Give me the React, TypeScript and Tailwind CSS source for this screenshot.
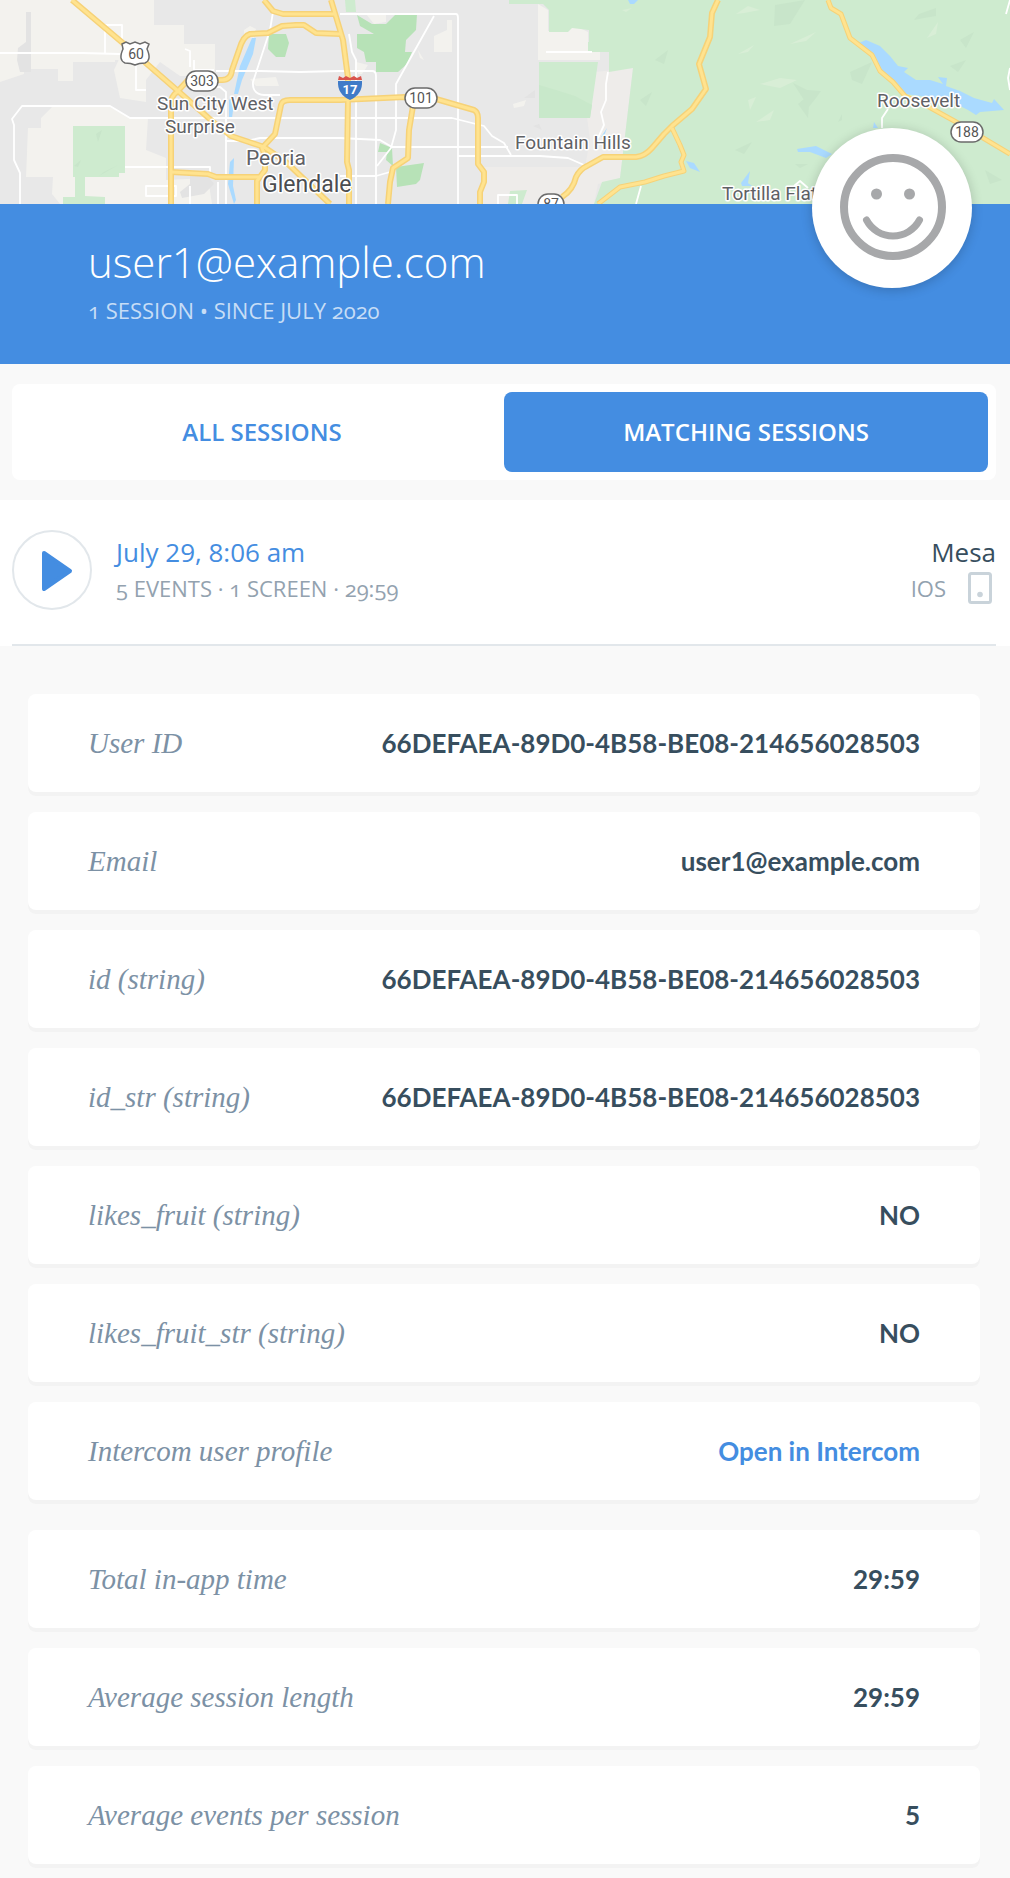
import { useState } from 'react';

type Row = { label: string; value: string; href?: string };

const profileRows: Row[] = [
  { label: 'User ID', value: '66DEFAEA-89D0-4B58-BE08-214656028503' },
  { label: 'Email', value: 'user1@example.com' },
  { label: 'id (string)', value: '66DEFAEA-89D0-4B58-BE08-214656028503' },
  { label: 'id_str (string)', value: '66DEFAEA-89D0-4B58-BE08-214656028503' },
  { label: 'likes_fruit (string)', value: 'NO' },
  { label: 'likes_fruit_str (string)', value: 'NO' },
  { label: 'Intercom user profile', value: 'Open in Intercom', href: '#intercom' },
];

const statRows: Row[] = [
  { label: 'Total in-app time', value: '29:59' },
  { label: 'Average session length', value: '29:59' },
  { label: 'Average events per session', value: '5' },
];

// Roads are drawn twice: a wide darker casing, then the lighter fill on top
const highways = [
  'M72 0L124 44L178 91L212 121L231 136L264 147L286 162L330 204',
  'M171 204V104Q171 96 177 92L188 80H222Q231 80 232 70L239 50Q243 36 250 34L268 33L282 26L296 25H304L316 33L340 34',
  'M171 172L208 174L216 177H260',
  'M257 204V181L265 170V156L262 148L275 134L281 105Q282 100 290 100H340L405 97L436 99L474 110Q478 112 478 118V164L484 172V182L480 192V204',
  'M264 0L273 11L283 14H335',
  'M331 0L343 40L348 78V100L347 162L349 170V204',
  'M413 106L409 130L408 158L393 168L390 182L388 204',
  'M562 197Q573 190 576 177Q580 169 587 166L603 157H636Q645 156 652 148L664 134L672 126L692 109L706 89L699 64L710 37L712 13L718 0',
];

const smallHighways = [
  'M598 204L620 187L645 182L664 176L676 173L684 171L681 162L684 155L680 145L672 128',
  'M828 0L831 8L841 14L850 38L872 55L880 71L893 82L905 96L929 107L958 123L1010 154',
];

const streets = [
  'M0 53H82L120 54',
  'M20 204V173L14 160V125L12 119L22 106H110L130 118H340',
  'M226 204V141H246L260 138H340',
  'M226 141V92L220 87H198',
  'M105 54V25H122V42L136 55V90H146',
  'M194 60V70H214M185 49L190 51V67',
  'M216 71H260L300 72L340 71L372 71Q376 71 376 76V204',
  'M273 12L270 30L253 82Q252 94 264 95H280',
  'M340 14H456Q458 14 458 18V204',
  'M434 16L396 84V130L391 148L377 166',
  'M349 34L352 52L356 60V204',
  'M340 118H452L484 126L492 136L504 143L511 155',
  'M340 138L380 140L392 147H508M458 156H540L568 158L584 165',
  'M340 176H376L390 172',
  'M125 167H210V177M146 186H176V196H146ZM190 186V204M218 182V204',
  'M546 52H592M608 72L606 84V100L601 112L604 125L598 138',
  'M498 204V195H517V204M641 186L636 204',
  'M888 109L882 118V128M1010 0L1006 14M1010 68L1008 78L1010 90',
  'M794 186L800 181L808 188',
];

function RouteBadge({ x, y, w, label }: { x: number; y: number; w: number; label: string }) {
  return (
    <g>
      <rect x={x - w / 2} y={y - 10} width={w} height={20} rx={10} fill="#fff" stroke="#6b6b6b" strokeWidth={1.5} />
      <text x={x} y={y + 5} fontSize={14} fill="#555" textAnchor="middle">
        {label}
      </text>
    </g>
  );
}

function MapBanner() {
  return (
    <svg
      viewBox="0 0 1010 204"
      preserveAspectRatio="xMidYMid slice"
      className="block h-[204px] w-full font-['Roboto',sans-serif]"
      role="img"
      aria-label="Map of the Phoenix area"
    >
      <rect width="1010" height="204" fill="#e8e8e8" />

      {/* open land */}
      <g fill="#f3f2ee">
        <path d="M0 0H154V44H130L150 52V60H115V62H73V81H58V69H24V74L0 82Z" />
        <path d="M128 40L154 25H184V44H215V76H180L160 62L146 80V102L120 98L114 70Z" />
        <path d="M28 128H41V118L52 107H110L130 118H148L146 150L166 158V180L208 178L212 204H60L52 194L53 177H26Z" />
        <path d="M164 53H174V63H164ZM244 30L250 26L256 29L254 38L244 36ZM250 79L276 77L279 86L256 86Z" />
        <path d="M366 14H386V22L374 24ZM434 36L447 30V20H452V52H434ZM418 50L424 60L420 58Z" />
        <path d="M538 4L548 10V31H568V28H580L588 32V50H600V60H538Z" />
        <path d="M513 104L526 100L524 106L514 108ZM356 62L368 65L362 74H358Z" />
      </g>
      <path d="M483 167H585L590 140L586 110L595 72L633 68L620 178L598 184L594 204H483Z" fill="#eeecea" />
      <g fill="#e3e3e3">
        <path d="M26 12H31V72H20L17 60L18 48L26 42Z" />
        <path d="M180 192L190 184V176H208L214 184L204 194L182 198Z" />
        <path d="M524 98L535 90V98ZM533 126L539 124L542 130Z" />
      </g>

      {/* parks and forest */}
      <g fill="#ceebcf">
        <path d="M73 126H125V173H119V177H85V196L105 197V204H63V197H75V177H73Z" />
        <path d="M509 0H1010V204H594L602 182L620 178L633 68L609 72V52H588V42H589V30L572 28L568 32H549V10L543 4H509Z" />
        <path d="M539 62H598L590 118H539Z" />
        <path d="M345 0H355L356 12H346ZM510 191L527 190L522 204H508Z" />
      </g>
      <g fill="#b7e2b7">
        <path d="M269 34H286L289 43L285 57H276L268 49Z" />
        <path d="M357 15L372 24H386L396 14H417L416 30L406 40L405 52H412L407 64L398 72H376V62H366L364 52L357 48V34H374L360 26Z" />
        <path d="M380 143L392 148L393 166L386 160L387 152H378ZM396 167L424 163L420 180L416 184L397 187Z" />
      </g>
      <path d="M539 85L556 90L575 96L592 105L590 118H539Z" fill="#c8e8ca" />

      {/* terrain shading */}
      <g fill="#c8e5ca">
        <path d="M775 5L805 0L790 24L774 26ZM850 72L872 62L862 84L852 80Z" />
        <path d="M793 83L807 90L821 91L816 98L808 108L804 100ZM798 104L810 94L808 118Z" />
        <path d="M919 14L936 8V16L924 18L914 20ZM838 122L842 114V120ZM795 164H808L800 168Z" />
        <path d="M640 100L652 92L646 106ZM655 60L668 50L664 64ZM735 150L752 142L744 154Z" />
        <path d="M74 166L81 160L78 167ZM96 134L102 130L98 142ZM99 176L118 165L104 172Z" />
        <path d="M960 40L974 32L966 48ZM985 170L1002 180L990 184ZM950 66L966 60L958 72Z" />
      </g>
      <g fill="#d8eed6">
        <path d="M736 14L748 6L760 10L744 13ZM738 54L754 45L748 52ZM760 84L780 78L797 80L780 88Z" />
        <path d="M927 38L938 22L936 34ZM748 100L756 97L750 110ZM790 44L816 32L806 41Z" />
        <path d="M622 10L632 8L626 12ZM654 12L664 10ZM756 122L774 110L770 120Z" />
      </g>

      {/* water */}
      <g fill="#aadaff">
        <path d="M628 0H638L634 4H630ZM252 38H256L253 54L242 80L238 94H234L240 66Z" />
        <path d="M229 100L235 96L232 118H229ZM230 162L234 158L233 186L236 200L234 204L228 184Z" />
        <path d="M859 43L866 40L880 46L890 56L898 66L908 68L904 72L916 80L930 80L943 84L938 77L947 78L946 86L960 91L974 98L992 103L994 99L1004 110L980 112L976 115L968 110L958 105L934 98L906 94L892 82L880 70L876 58Z" />
        <path d="M686 161L694 163L700 172L690 168ZM741 183L750 171L748 183L752 186L742 186ZM797 149L816 146L832 154L826 158L810 152L798 152Z" />
        <path d="M874 122L878 128H873ZM601 137L607 128L604 136ZM345 52L348 54L345 56Z" />
      </g>

      <g fill="none" stroke="#fff" strokeWidth={1.8} strokeLinejoin="round">
        {streets.map((d) => <path key={d} d={d} />)}
      </g>
      <g fill="none" stroke="#f6d278" strokeLinejoin="round">
        {highways.map((d) => <path key={d} d={d} strokeWidth={6} />)}
        {smallHighways.map((d) => <path key={d} d={d} strokeWidth={5} />)}
      </g>
      <g fill="none" stroke="#ffe38f" strokeLinejoin="round">
        {highways.map((d) => <path key={d} d={d} strokeWidth={3} />)}
        {smallHighways.map((d) => <path key={d} d={d} strokeWidth={3} />)}
      </g>

      {/* US 60 shield */}
      <path
        d="M122 44L126 42L130 44L135 42L140 44L145 42L149 44L147 49Q152 60 145 63Q139 63 135 65Q131 63 125 63Q118 60 123 49Z"
        fill="#fff"
        stroke="#6b6b6b"
        strokeWidth={1.5}
      />
      <text x={136} y={59} fontSize={14} fill="#555" textAnchor="middle">60</text>

      {/* I-17 shield */}
      <path d="M339 76L343 78L346 76L350 78L354 76L357 78L361 76L362 80H338Z" fill="#d9544d" />
      <path d="M338 81H362Q363 94 350 100Q337 94 338 81Z" fill="#3f7bc8" />
      <text x={350} y={94} fontSize={13} fontWeight={700} fill="#fff" textAnchor="middle">17</text>

      <RouteBadge x={202} y={81} w={32} label="303" />
      <RouteBadge x={421} y={98} w={32} label="101" />
      <RouteBadge x={551} y={204} w={26} label="87" />
      <RouteBadge x={967} y={132} w={32} label="188" />

      <g fill="#5f6165" stroke="#fff" strokeWidth={3} strokeLinejoin="round" paintOrder="stroke">
        <text x={157} y={110} fontSize={19}>Sun City West</text>
        <text x={165} y={133} fontSize={19}>Surprise</text>
        <text x={246} y={165} fontSize={21}>Peoria</text>
        <text x={262} y={192} fontSize={23} fill="#4b4d50">Glendale</text>
        <text x={515} y={149} fontSize={19}>Fountain Hills</text>
        <text x={877} y={107} fontSize={19}>Roosevelt</text>
        <text x={722} y={200} fontSize={19}>Tortilla Flat</text>
      </g>
    </svg>
  );
}

function Avatar() {
  return (
    <div className="absolute top-32 right-[38px] flex size-40 items-center justify-center rounded-full bg-white shadow-[0_2px_12px_rgba(0,0,0,0.2)]">
      <svg viewBox="0 0 108 108" className="size-[108px]" fill="none" stroke="#a7a8aa" role="img" aria-label="Smiley avatar">
        <circle cx="55" cy="53" r="49" strokeWidth="8" />
        <path d="M28.5 66A30 30 0 0 0 81.5 66" strokeWidth="7" strokeLinecap="round" />
        <circle cx="38.5" cy="40" r="5.5" fill="#a7a8aa" stroke="none" />
        <circle cx="71.5" cy="40" r="5.5" fill="#a7a8aa" stroke="none" />
      </svg>
    </div>
  );
}

function RowList({ rows }: { rows: Row[] }) {
  return (
    <dl className="flex flex-col gap-5">
      {rows.map((row) => (
        <div
          key={row.label}
          className="flex items-center justify-between gap-4 rounded-lg bg-white px-[60px] py-8 shadow-[0_4px_0_#f3f3f3]"
        >
          <dt className="font-['Liberation_Serif',serif] text-[29px] leading-[34px] text-[#7c91a5] italic">{row.label}</dt>
          <dd className="text-right font-['Lato',sans-serif] text-[26px] leading-[34px] font-bold text-[#374e5e]">
            {row.href ? (
              <a href={row.href} className="text-[#448de1]">{row.value}</a>
            ) : (
              row.value
            )}
          </dd>
        </div>
      ))}
    </dl>
  );
}

export default function App() {
  const [tab, setTab] = useState<'all' | 'matching'>('matching');

  const tabClass = (active: boolean) =>
    active
      ? 'h-20 flex-1 rounded-lg bg-[#448de1] text-2xl font-semibold text-white'
      : 'h-20 flex-1 rounded-lg text-2xl font-semibold text-[#448de1]';

  return (
    <div className="bg-[#f9f9f9] font-['Open_Sans',sans-serif]">
      <header className="relative">
        <MapBanner />
        <div className="bg-[#448de1] px-[88px] pt-[34px] pb-9">
          <h1 className="text-[42px] leading-[48px] font-light text-white">user1@example.com</h1>
          <p className="mt-1.5 text-[22px] leading-9 text-[#c7ddf6] oldstyle-nums">1 SESSION • SINCE JULY 2020</p>
        </div>
        <Avatar />
      </header>

      <div className="py-5 pr-3.5 pl-3">
        <div className="flex rounded-lg bg-white p-2">
          <button type="button" className={tabClass(tab === 'all')} onClick={() => setTab('all')}>
            ALL SESSIONS
          </button>
          <button type="button" className={tabClass(tab === 'matching')} onClick={() => setTab('matching')}>
            MATCHING SESSIONS
          </button>
        </div>
      </div>

      <section className="bg-white pr-3.5 pl-3">
        <div className="flex items-center gap-6 border-b-2 border-[#e2e7eb] pt-[30px] pb-[34px]">
          <button
            type="button"
            aria-label="Play session"
            className="flex size-20 shrink-0 items-center justify-center rounded-full border-2 border-[#e2e7eb]"
          >
            <svg viewBox="0 0 76 76" className="size-[76px]">
              <path d="M30 21L56 39L30 57Z" fill="#448de1" stroke="#448de1" strokeWidth="4" strokeLinejoin="round" />
            </svg>
          </button>
          <div className="flex-1">
            <h2 className="text-[26px] leading-9 font-medium text-[#448de1]">July 29, 8:06 am</h2>
            <p className="text-[22px] leading-9 text-[#93a2af] oldstyle-nums">5 EVENTS · 1 SCREEN · 29:59</p>
          </div>
          <div className="text-right">
            <p className="text-[26px] leading-9 font-medium text-[#374e5e]">Mesa</p>
            <p className="flex items-center justify-end gap-[22px] pr-1 text-[22px] leading-9 text-[#93a2af]">
              IOS
              <svg viewBox="0 0 24 32" className="h-8 w-6" aria-hidden="true">
                <rect x="1.5" y="1.5" width="21" height="29" rx="2" fill="none" stroke="#c9d3da" strokeWidth="3" />
                <circle cx="12" cy="22.5" r="2.8" fill="#c9d3da" />
              </svg>
            </p>
          </div>
        </div>
      </section>

      <main className="flex flex-col gap-[30px] pt-12 pr-[30px] pb-3.5 pl-7">
        <RowList rows={profileRows} />
        <RowList rows={statRows} />
      </main>
    </div>
  );
}
